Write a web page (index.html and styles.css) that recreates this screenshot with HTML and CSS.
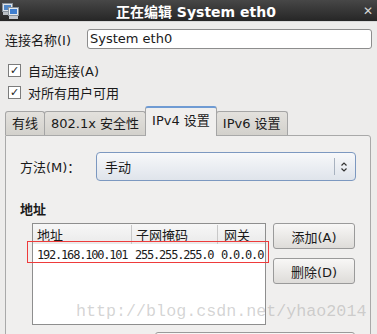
FILE: index.html
```html
<!DOCTYPE html>
<html lang="zh">
<head>
    <meta charset="UTF-8">
    <title>正在编辑 System eth0</title>
    <link rel="stylesheet" href="styles.css">
</head>
<body>
    <div class="window">
        <div class="titlebar">
            <svg class="appIcon" width="18" height="18" viewBox="0 0 18 18">
                <rect x="1.5" y="1.5" width="10" height="8" fill="#dfe4ea" stroke="#8a939c"/>
                <rect x="3" y="3" width="7" height="5" fill="#4f86c6"/>
                <rect x="2" y="10" width="9" height="3" fill="#b9bec4"/>
                <rect x="7.5" y="5.5" width="10" height="8" fill="#e6eaee" stroke="#8a939c"/>
                <rect x="9" y="7" width="7" height="5" fill="#3f7fd0"/>
                <rect x="8" y="14" width="9" height="3" fill="#c3c8ce"/>
            </svg>
            <span class="title">正在编辑 System eth0</span>
            <span class="closeBtn">✕</span>
        </div>

        <div class="nameRow">
            <label>连接名称(I)</label>
            <div class="textInput">System eth0</div>
        </div>

        <div class="checkRow"><span class="check">✓</span>自动连接(A)</div>
        <div class="checkRow"><span class="check">✓</span>对所有用户可用</div>

        <div class="tabs">
            <div class="tab">有线</div>
            <div class="tab">802.1x 安全性</div>
            <div class="tab active">IPv4 设置</div>
            <div class="tab">IPv6 设置</div>
        </div>

        <div class="panel">
            <div class="methodRow">
                <label>方法(M)：</label>
                <div class="combo">
                    <span class="comboText">手动</span>
                    <span class="comboSep"></span>
                    <svg class="comboArrows" width="8" height="12" viewBox="0 0 8 12">
                        <path d="M1.5 4.5 L4 2 L6.5 4.5 M1.5 7.5 L4 10 L6.5 7.5" fill="none" stroke="#333" stroke-width="1.2"/>
                    </svg>
                </div>
            </div>

            <div class="sectionTitle">地址</div>

            <div class="addrRow">
                <div class="addrList">
                    <div class="listHead">
                        <span class="col colAddr">地址</span>
                        <span class="col colMask">子网掩码</span>
                        <span class="col colGw">网关</span>
                    </div>
                    <div class="listItem">
                        <span class="col colAddr">192.168.100.101</span>
                        <span class="col colMask">255.255.255.0</span>
                        <span class="col colGw">0.0.0.0</span>
                    </div>
                </div>
                <div class="addrButtons">
                    <button>添加(A)</button>
                    <button>删除(D)</button>
                </div>
            </div>

            <div class="bottomRow">
                <button class="wideBtn"></button>
            </div>
        </div>

        <!-- 标注框 & 水印 -->
        <div class="redMark"></div>
        <div class="watermark">http://blog.csdn.net/yhao2014</div>
    </div>
</body>
</html>
```

FILE: styles.css
```css
body {
    margin: 0;
    background-color: #edeceb;
    font-family: "DejaVu Sans", "Noto Sans CJK SC", sans-serif;
    font-size: 13px;
    color: #1a1a1a;
}

.window {
    position: relative;
    width: 377px;
    height: 334px;
    overflow: hidden;
}

.titlebar {
    display: flex;
    align-items: center;
    height: 21px;
    padding: 0 4px 0 1px;
    background: linear-gradient(#474747, #262626);
    border-bottom: 1px solid #d8d8d8;
}

.appIcon {
    flex: none;
}

.title {
    flex: 1;
    text-align: center;
    color: #ffffff;
    font-weight: bold;
    font-size: 14px;
    padding-left: 10px;
}

.closeBtn {
    color: #d6d6d6;
    font-weight: bold;
    font-size: 12px;
}

.nameRow {
    display: flex;
    align-items: center;
    margin-top: 7px;
    padding: 0 5px;
}

.nameRow label {
    width: 82px;
}

.textInput {
    flex: 1;
    height: 18px;
    line-height: 18px;
    padding: 0 2px;
    background-color: #ffffff;
    border: 1px solid #8d8d8d;
    border-radius: 3px;
}

.checkRow {
    display: flex;
    align-items: center;
    height: 22px;
    padding-left: 8px;
}

.nameRow + .checkRow {
    margin-top: 10px;
}

.check {
    display: inline-flex;
    justify-content: center;
    align-items: center;
    width: 11px;
    height: 11px;
    margin-right: 7px;
    border: 1px solid #7c7c7c;
    background-color: #ffffff;
    font-size: 11px;
    line-height: 11px;
    font-weight: bold;
    color: #222;
}

.tabs {
    display: flex;
    align-items: flex-end;
    height: 28px;
    margin-top: 4px;
    padding-left: 5px;
}

.tab {
    height: 23px;
    line-height: 23px;
    padding: 0 6px;
    background: linear-gradient(#e3e1dd, #d3d1cc);
    border: 1px solid #a5a5a5;
    border-bottom: none;
    border-radius: 3px 3px 0 0;
    margin-right: -1px;
}

.tab.active {
    position: relative;
    z-index: 1;
    height: 28px;
    line-height: 26px;
    background: #f0efee;
    border-color: #a5a5a5;
    border-top: 2px solid #6f9bd3;
    margin-bottom: -1px;
}

.panel {
    margin-left: 5px;
    width: 366px;
    height: 220px;
    border: 1px solid #a9a9a9;
    border-radius: 0 3px 0 0;
    background-color: #f0efee;
    padding: 16px 15px 0 14px;
    box-sizing: border-box;
}

.methodRow {
    display: flex;
    align-items: center;
}

.methodRow label {
    width: 76px;
}

.combo {
    flex: 1;
    display: flex;
    align-items: center;
    height: 27px;
    margin-right: -1px;
    padding: 0 7px 0 8px;
    border: 1px solid #7c98c0;
    border-radius: 4px;
    background: linear-gradient(#f7f8fa, #dfe4eb);
}

.comboText {
    flex: 1;
}

.comboSep {
    width: 1px;
    height: 17px;
    margin-right: 5px;
    background-color: #a8b2bf;
}

.sectionTitle {
    margin-top: 18px;
    font-weight: bold;
    font-size: 13px;
}

.addrRow {
    display: flex;
    margin-top: 5px;
    padding-left: 12px;
}

.addrList {
    width: 234px;
    height: 100px;
    border: 1px solid #8e8e8e;
    background-color: #ffffff;
}

.listHead,
.listItem {
    display: flex;
    align-items: center;
}

.listHead {
    height: 20px;
    background: linear-gradient(#f7f7f7, #eaeaea);
}

.listItem {
    height: 22px;
    font-family: "DejaVu Sans Mono", monospace;
    font-size: 12px;
    letter-spacing: -1.2px;
}

.col {
    box-sizing: border-box;
    padding-left: 4px;
}

.colAddr {
    width: 98px;
}

.colMask {
    width: 86px;
}

.listHead .colMask,
.listHead .colGw {
    border-left: 1px solid #c8c8c8;
}

.listHead .colGw {
    padding-left: 6px;
}

.colGw {
    flex: 1;
}

.addrButtons {
    display: flex;
    flex-direction: column;
    gap: 9px;
    margin-left: 7px;
}

button {
    width: 82px;
    height: 26px;
    font-family: "DejaVu Sans", "Noto Sans CJK SC", sans-serif;
    font-size: 13px;
    color: #1a1a1a;
    border: 1px solid #9a9a9a;
    border-radius: 3px;
    background: linear-gradient(#f8f7f6, #dedcd9);
    padding: 0;
}

.bottomRow {
    display: flex;
    justify-content: flex-end;
    margin-top: 7px;
}

.wideBtn {
    width: 200px;
}

.redMark {
    position: absolute;
    left: 27px;
    top: 241px;
    width: 240px;
    height: 20px;
    border: 1.5px solid #ee3b3b;
}

.watermark {
    position: absolute;
    left: 76px;
    top: 302px;
    font-family: "Liberation Mono", monospace;
    font-size: 16.7px;
    color: rgba(160, 160, 160, 0.45);
    pointer-events: none;
}
```
